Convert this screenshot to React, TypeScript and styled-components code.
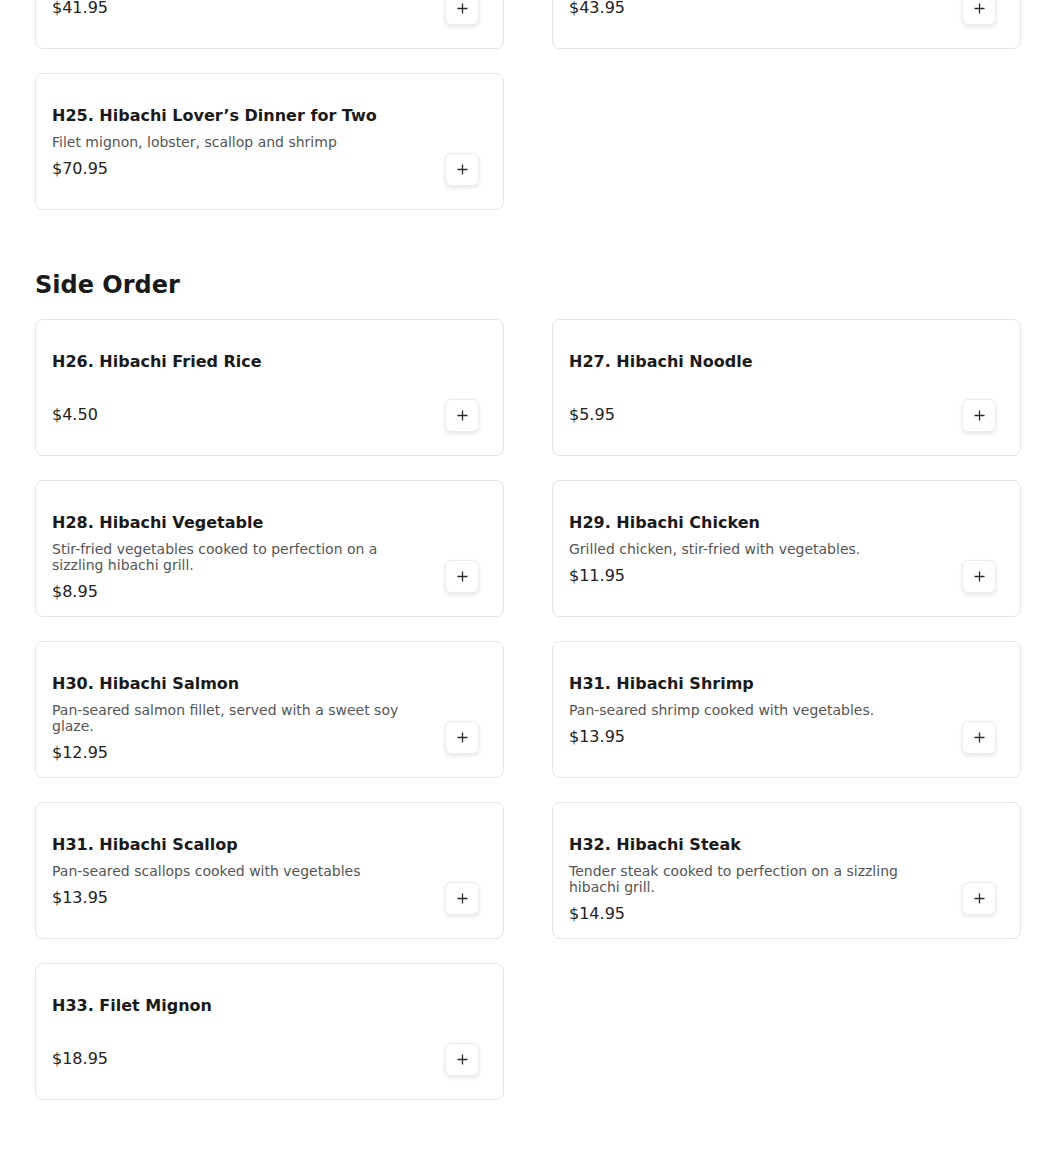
import React from "react";
import styled, { createGlobalStyle } from "styled-components";

const GlobalStyle = createGlobalStyle`
  * { box-sizing: border-box; }
  html, body { margin: 0; padding: 0; background: #ffffff; }
  body { font-family: "DejaVu Sans", "Liberation Sans", sans-serif; color: #1a1a1a; }
`;

type Item = { code: string; name: string; desc?: string; price: string };

const sections: { title: string; items: Item[] }[] = [
  {
    title: "Hibachi Dinner",
    items: [
      { code: "H23", name: "Hibachi Seafood Combo", desc: "Shrimp, scallop and lobster", price: "$41.95" },
      { code: "H24", name: "Hibachi Deluxe Combo", desc: "Filet mignon, shrimp and lobster", price: "$43.95" },
      { code: "H25", name: "Hibachi Lover’s Dinner for Two", desc: "Filet mignon, lobster, scallop and shrimp", price: "$70.95" },
    ],
  },
  {
    title: "Side Order",
    items: [
      { code: "H26", name: "Hibachi Fried Rice", price: "$4.50" },
      { code: "H27", name: "Hibachi Noodle", price: "$5.95" },
      { code: "H28", name: "Hibachi Vegetable", desc: "Stir-fried vegetables cooked to perfection on a sizzling hibachi grill.", price: "$8.95" },
      { code: "H29", name: "Hibachi Chicken", desc: "Grilled chicken, stir-fried with vegetables.", price: "$11.95" },
      { code: "H30", name: "Hibachi Salmon", desc: "Pan-seared salmon fillet, served with a sweet soy glaze.", price: "$12.95" },
      { code: "H31", name: "Hibachi Shrimp", desc: "Pan-seared shrimp cooked with vegetables.", price: "$13.95" },
      { code: "H31", name: "Hibachi Scallop", desc: "Pan-seared scallops cooked with vegetables", price: "$13.95" },
      { code: "H32", name: "Hibachi Steak", desc: "Tender steak cooked to perfection on a sizzling hibachi grill.", price: "$14.95" },
      { code: "H33", name: "Filet Mignon", price: "$18.95" },
    ],
  },
];

const Page = styled.main`
  width: 986px;
  margin: -88px 0 0 35px;
  padding-bottom: 56px;
  display: flex;
  flex-direction: column;
  gap: 59px;
`;

const Section = styled.section`
  display: flex;
  flex-direction: column;
  gap: 18px;
`;

const Heading = styled.h2<{ $hidden?: boolean }>`
  margin: 0;
  font-size: 24px;
  line-height: 32px;
  font-weight: 700;
  color: #1a1a1a;
  display: ${(p) => (p.$hidden ? "none" : "block")};
`;

const Grid = styled.div`
  display: grid;
  grid-template-columns: repeat(2, 469px);
  column-gap: 48px;
  row-gap: 24px;
`;

const Card = styled.article`
  height: 137px;
  border: 1px solid #e4e4e4;
  border-radius: 8px;
  background: #fff;
  padding: 30px 24px 23px 16px;
  display: flex;
  justify-content: space-between;
  align-items: flex-end;
`;

const Info = styled.div`
  align-self: flex-start;
  max-width: 365px;
  display: flex;
  flex-direction: column;
`;

const Title = styled.h3`
  margin: 0;
  font-size: 16px;
  line-height: 24px;
  font-weight: 700;
  color: #1a1a1a;
`;

const Desc = styled.p`
  margin: 6px 0 0;
  min-height: 16px;
  font-size: 14px;
  line-height: 16px;
  color: #555555;
`;

const Price = styled.div`
  margin-top: 7px;
  font-size: 16px;
  line-height: 24px;
  color: #222222;
`;

const AddButton = styled.button`
  width: 34px;
  height: 33px;
  flex: none;
  border: 1px solid #ececec;
  border-radius: 6px;
  background: #fff;
  box-shadow: 0 2px 4px rgba(0, 0, 0, 0.1);
  display: flex;
  align-items: center;
  justify-content: center;
  padding: 0;
  cursor: pointer;
  color: #2a2a2a;
`;

const PlusIcon = () => (
  <svg width="11" height="11" viewBox="0 0 11 11" aria-hidden="true">
    <path d="M5.5 0.5v10M0.5 5.5h10" stroke="currentColor" strokeWidth="1.3" fill="none" />
  </svg>
);

export default function App() {
  return (
    <>
      <GlobalStyle />
      <Page>
        {sections.map((s, si) => (
          <Section key={s.title}>
            <Heading $hidden={si === 0}>{s.title}</Heading>
            <Grid>
              {s.items.map((it, i) => (
                <Card key={i}>
                  <Info>
                    <Title>
                      {it.code}. {it.name}
                    </Title>
                    <Desc>{it.desc ?? ""}</Desc>
                    <Price>{it.price}</Price>
                  </Info>
                  <AddButton aria-label={`Add ${it.name}`}>
                    <PlusIcon />
                  </AddButton>
                </Card>
              ))}
            </Grid>
          </Section>
        ))}
      </Page>
    </>
  );
}
